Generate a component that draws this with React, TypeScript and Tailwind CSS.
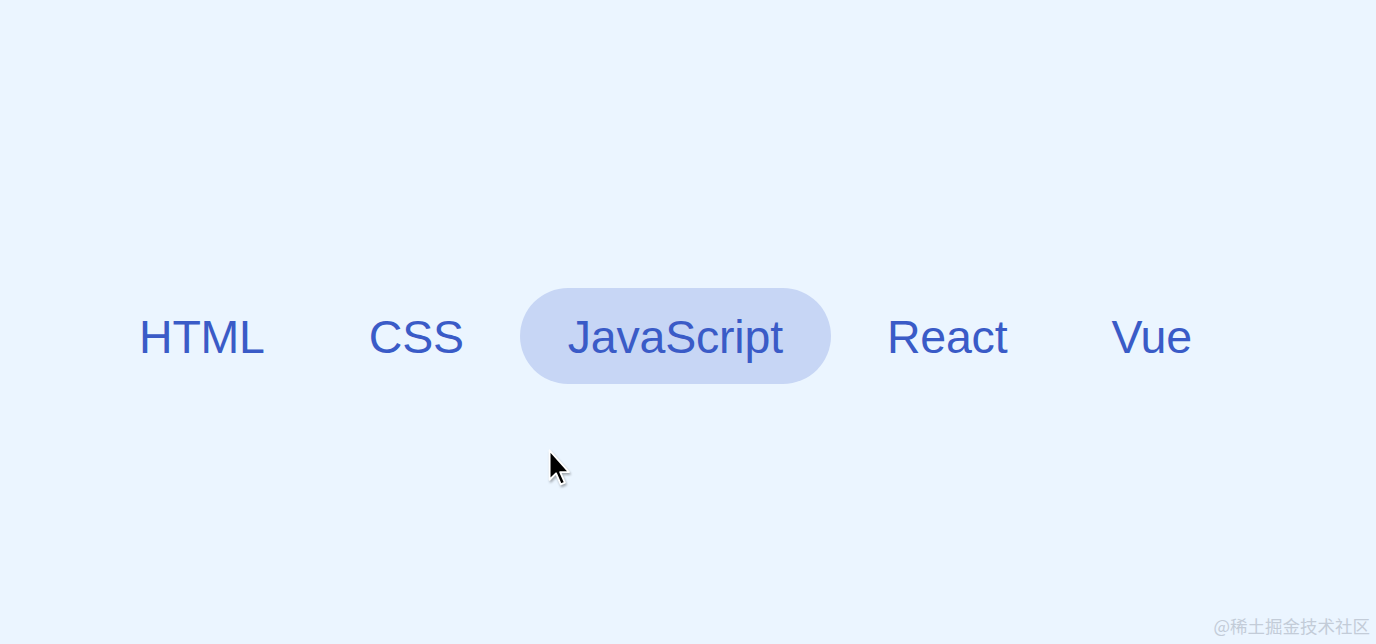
import { useState } from "react";

const TABS = ["HTML", "CSS", "JavaScript", "React", "Vue"];

function Cursor() {
  return (
    <svg width="26" height="40" viewBox="0 0 22 34" className="absolute left-[546px] top-[448px] drop-shadow-[1px_2px_1px_rgba(0,0,0,0.3)]">
      <path d="M3 2 L3 27 L8.5 21.5 L12.5 31 L16 29.5 L12 20.5 L19.5 20.5 Z" fill="#000" stroke="#fff" strokeWidth="1.6" strokeLinejoin="round" />
    </svg>
  );
}

export default function App() {
  const [active, setActive] = useState(2);

  return (
    <div className="relative w-full h-[644px] overflow-hidden bg-[#ebf5ff] font-['Liberation_Sans',Arial,sans-serif]">
      <div className="flex items-center gap-[8px] pl-[91px] pt-[288px]">
        {TABS.map((t, i) => (
          <button
            key={t}
            onClick={() => setActive(i)}
            className={
              "h-[96px] px-12 pt-[3px] rounded-full text-[46.5px] leading-none text-[#3a5bc7] tracking-[-0.2px] " +
              (i === active ? "bg-[#c7d6f5]" : "bg-transparent")
            }
          >
            {t}
          </button>
        ))}
      </div>

      <Cursor />

      <div className="absolute right-[6px] bottom-[5px] text-[17.5px] text-[#c3ccd8] font-['Noto_Sans_CJK_SC',sans-serif]">
        @稀土掘金技术社区
      </div>
    </div>
  );
}
